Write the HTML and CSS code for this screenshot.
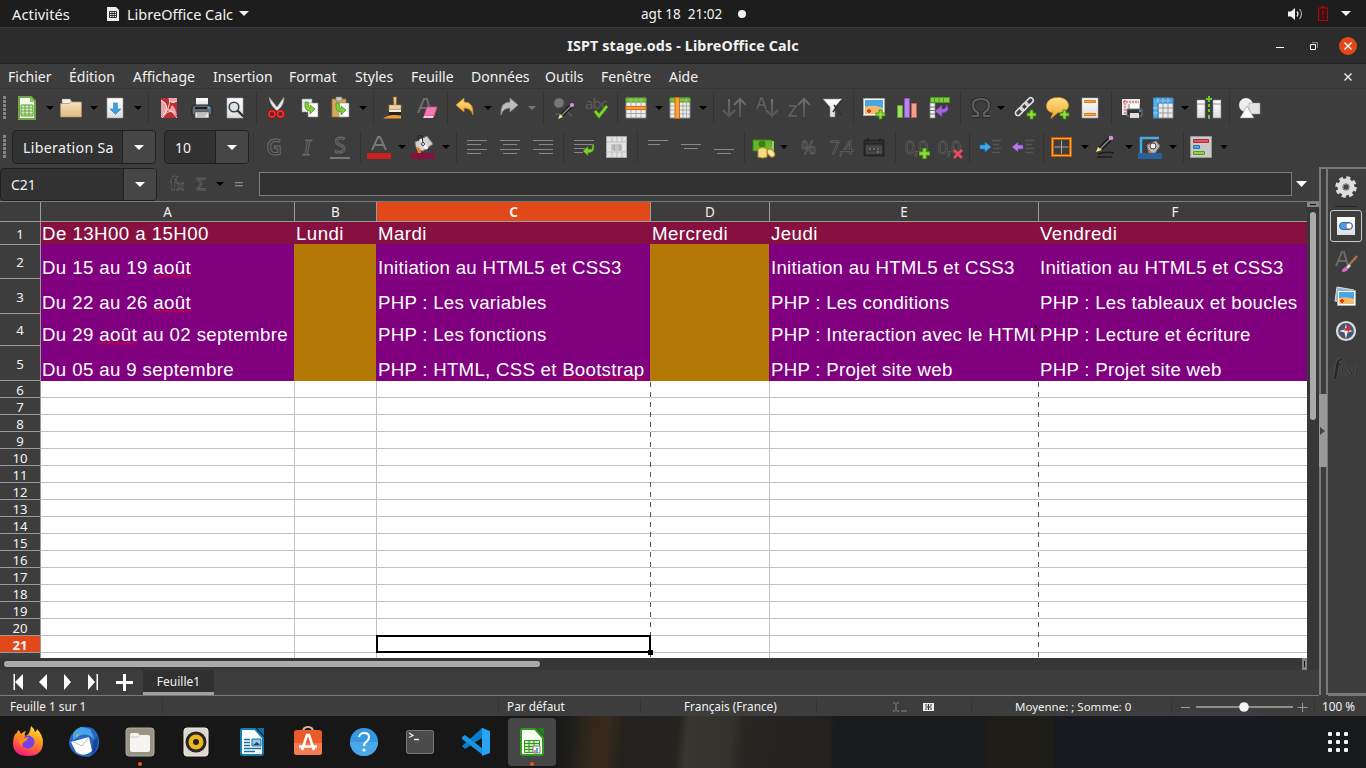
FILE: index.html
```html
<!DOCTYPE html>
<html lang="fr">
<head>
<meta charset="utf-8">
<title>ISPT stage.ods - LibreOffice Calc</title>
<link rel="stylesheet" href="styles.css">
</head>
<body>
<svg class="defs" width="0" height="0">
  <defs>
    <linearGradient id="paper" x1="0" y1="0" x2="0" y2="1"><stop offset="0" stop-color="#fff"/><stop offset="1" stop-color="#ddd"/></linearGradient>
    <linearGradient id="gold" x1="0" y1="0" x2="0" y2="1"><stop offset="0" stop-color="#ffe08a"/><stop offset="1" stop-color="#f0a428"/></linearGradient>
    <linearGradient id="sand" x1="0" y1="0" x2="0" y2="1"><stop offset="0" stop-color="#f8e2bd"/><stop offset="1" stop-color="#dfba83"/></linearGradient>
    <linearGradient id="dim" gradientUnits="userSpaceOnUse" x1="0" y1="0" x2="0" y2="24"><stop offset="0" stop-color="#737373"/><stop offset="1" stop-color="#505050"/></linearGradient>
    <linearGradient id="fire" x1=".7" y1="0" x2=".3" y2="1"><stop offset="0" stop-color="#ffe43a"/><stop offset=".45" stop-color="#ff8a1f"/><stop offset="1" stop-color="#f5157b"/></linearGradient>
    <g id="plus"><path d="M3 0h3v3h3v3H6v3H3V6H0V3h3z" fill="#8fdc3c" stroke="#3f8f10" stroke-width=".9"/></g>
  </defs>
</svg>

<header class="topbar">
  <span class="activities">Activités</span>
  <svg class="app-mark" width="12" height="14" viewBox="0 0 12 14"><path d="M0 0h9l3 3v11H0z" fill="#eee"/><path d="M2.500 4.500h7v6h-7zM2.500 6.500h7M2.500 8.500h7M5 4.500v6M7.300 4.500v6" fill="none" stroke="#333" stroke-width="1"/></svg>
  <span class="app-name">LibreOffice Calc</span>
  <svg class="tri" width="10" height="5" viewBox="0 0 10 5"><path d="M0 0h10L5 5z" fill="#f2f2f2"/></svg>
  <span class="clock">agt 18&nbsp; 21:02</span>
  <i class="dot"></i>
  <svg class="sound" width="15" height="14" viewBox="0 0 15 14"><path d="M0 4.500h3L7 1v12L3 9.500H0z" fill="#f2f2f2"/><path d="M9 4.500q2 2.500 0 5" fill="none" stroke="#ddd" stroke-width="1.300"/><path d="M11.500 2q4 5 0 10" fill="none" stroke="#aaa" stroke-width="1.200"/></svg>
  <svg class="battery" width="10" height="15" viewBox="0 0 10 15"><path d="M.500 2h9v12.500h-9zM3 1h4" fill="none" stroke="#c00000" stroke-width="1.200"/><path d="M5 4v5M5 10.500v2" stroke="#a80000" stroke-width="1.800"/></svg>
  <svg class="tri" width="10" height="5" viewBox="0 0 10 5"><path d="M0 0h10L5 5z" fill="#f2f2f2"/></svg>
</header>

<div class="titlebar">
  <b>ISPT stage.ods - LibreOffice Calc</b>
  <div class="win">
    <svg width="8" height="9" viewBox="0 0 8 9"><path d="M0 6.500h8" stroke="#fff"/></svg>
    <svg width="8" height="8" viewBox="0 0 8 8"><path d="M2 .500h5.500V6" fill="none" stroke="#888"/><path d="M.500 2.500h5v5h-5z" fill="none" stroke="#fff"/></svg>
    <span class="close"><svg width="8" height="8" viewBox="0 0 8 8"><path d="M.500.500l7 7M7.500.500l-7 7" stroke="#fff" stroke-width="1.400"/></svg></span>
  </div>
</div>

<nav class="menu">
  <span>Fichier</span><span>Édition</span><span>Affichage</span><span>Insertion</span><span>Format</span><span>Styles</span><span>Feuille</span><span>Données</span><span>Outils</span><span>Fenêtre</span><span>Aide</span>
  <svg width="8" height="8" viewBox="0 0 8 8"><path d="M.500.500l7 7M7.500.500l-7 7" stroke="#eee" stroke-width="1.400"/></svg>
</nav>

<div class="toolbar">
  <i class="grip"></i>
  <div class="tg t1 late">
    <svg class="ic" viewBox="0 0 24 24"><path d="M4 1h12l4 4v18H4z" fill="#f4f8ee" stroke="#6fa744" stroke-width="2"/><path d="M15 1v5h5z" fill="#8fc565"/><path d="M6 9h12v11H6z" fill="#d7efc2" stroke="#579a31"/><path d="M6 12h12M6 15h12M6 18h12M10 9v11M14 9v11" stroke="#579a31" stroke-width=".8"/></svg><i class="dd"></i>
    <svg class="ic" viewBox="0 0 24 24"><path d="M3 3h8l2 3h9v7H3z" fill="#eee" stroke="#888" stroke-width=".5"/><path d="M1.500 7.500H10L12 6h10.500v15h-21z" fill="url(#sand)" stroke="#ae8b5b" stroke-width=".7"/></svg><i class="dd"></i>
    <svg class="ic" viewBox="0 0 24 24"><path d="M4 2h16v20H4z" fill="url(#paper)" stroke="#999" stroke-width=".6"/><path d="M10.500 7h4v6H18l-5.500 5.500L7 13h3.500z" fill="#3f9ee0" stroke="#247bba" stroke-width=".5"/></svg><i class="dd"></i>
  </div>
  <div class="tg t2">
    <svg class="ic" viewBox="0 0 24 24"><path d="M4 2h16v20H4z" fill="#bb2f34"/><path d="M4 4q6 3 6 8t-6 8zM13 2h7v3q-4 3-6 1zM15 9q4 3 5 11-4-4-7-4-4 1-7 6h-1q6-7 8-9z" fill="#e9a5a5"/><path d="M4 4q6 3 6 8t-6 9M12 2q1 7 8 3M5 22q8-9 8-20M11 13q5 2 9 9" stroke="#fff" fill="none" stroke-width=".8"/></svg>
    <svg class="ic" viewBox="0 0 24 24"><path d="M6 2h12v8H6z" fill="url(#paper)"/><path d="M2 11l3-2h14l3 2v8H2z" fill="#626b6e" stroke="#202425"/><path d="M5 12h14" stroke="#1d2122" stroke-width="2"/><path d="M5 16h14v6H5z" fill="#e9e9e9" stroke="#444" stroke-width=".6"/><path d="M7 18h10M7 20h8" stroke="#999"/><circle cx="18.500" cy="12" r="1.200" fill="#20c8f4"/></svg>
    <svg class="ic" viewBox="0 0 24 24"><path d="M4 2h16v20H4z" fill="url(#paper)" stroke="#aaa" stroke-width=".6"/><circle cx="11" cy="11" r="4.800" fill="#dce3e5" stroke="#3c4245" stroke-width="1.600"/><path d="M14.500 14.500l6 6" stroke="#333" stroke-width="2.400"/></svg>
  </div>
  <div class="tg t3">
    <svg class="ic" viewBox="0 0 24 24"><path d="M4 1q1 8 6 12l2 2 2-2q5-4 5-12l-7 10z" fill="#e8e8e8" stroke="#888" stroke-width=".6"/><ellipse cx="7" cy="18" rx="3" ry="3" fill="none" stroke="#7d0b0b" stroke-width="3"/><ellipse cx="15.500" cy="18" rx="3" ry="3" fill="none" stroke="#7d0b0b" stroke-width="3"/><ellipse cx="7" cy="18" rx="3" ry="3" fill="none" stroke="#ee2e2e" stroke-width="1.800"/><ellipse cx="15.500" cy="18" rx="3" ry="3" fill="none" stroke="#ee2e2e" stroke-width="1.800"/></svg>
    <svg class="ic" viewBox="0 0 24 24"><path d="M4 3h10v13H4z" fill="#eee" stroke="#999" stroke-width=".6"/><path d="M10 7h10v14H10z" fill="#fff" stroke="#888" stroke-width=".6"/><path d="M7 6v5q1 4 5 4v3l5-5-5-4v3q-2 0-2-6z" fill="#86cf3b" stroke="#3f8f10" stroke-width=".7"/></svg>
    <svg class="ic" viewBox="0 0 24 24"><path d="M1 3h14v18H1z" fill="#d9a85f" stroke="#9b6f2c" stroke-width=".8"/><path d="M5 1h6v4H5z" fill="#ccc" stroke="#777" stroke-width=".7"/><path d="M8 7h10v14H8z" fill="#fff" stroke="#888" stroke-width=".6"/><path d="M5 7v5q1 4 5 4v3l5-5-5-4v3q-2 0-2-6z" fill="#86cf3b" stroke="#3f8f10" stroke-width=".7"/></svg><i class="dd"></i>
  </div>
  <div class="tg t4">
    <svg class="ic" viewBox="0 0 24 24"><path d="M11.500 1h3l-.5 9h-2z" fill="#f0cf95" stroke="#a87b35" stroke-width=".7"/><path d="M7 9h12v5H7z" fill="url(#sand)" stroke="#b08742" stroke-width=".7"/><path d="M7 14h12v2H7z" fill="#eee"/><path d="M7 16h12v3H7z" fill="#222"/><path d="M1 22.500q6-5 18-3v3z" fill="#ef9b2e"/></svg>
    <svg class="ic" viewBox="0 0 24 24"><path d="M3 17L9 3h3l3 11M5 12h7" fill="none" stroke="#6c6c6c" stroke-width="2"/><path d="M12 11h10l-3 9H9z" fill="#f17bae" stroke="#d94b8c" stroke-width=".7"/><path d="M9 20h10l-1 2H8z" fill="#ffc6de"/></svg>
  </div>
  <div class="tg t5 tight late">
    <svg class="ic" viewBox="0 0 24 24"><path d="M3 9l8-7v4q10 0 9 13-2-7-9-7v4z" fill="url(#gold)" stroke="#c58a16" stroke-width=".8"/></svg><i class="dd"></i>
    <svg class="ic" viewBox="0 0 24 24"><path d="M21 9l-8-7v4Q3 6 4 19q2-7 9-7v4z" fill="#bcbcbc" stroke="#888" stroke-width=".8"/></svg><i class="dd off"></i>
  </div>
  <div class="tg t6">
    <svg class="ic" viewBox="0 0 24 24"><circle cx="7" cy="7" r="5" fill="#777" stroke="#565656"/><path d="M12 13l8 7M3 18h7" stroke="#555" stroke-width="2"/><path d="M9 20L19 10" stroke="#1d1d1d" stroke-width="4"/><path d="M9 20L19 10" stroke="#888" stroke-width="1.500"/><circle cx="20" cy="9" r="2" fill="#e08be0"/><path d="M6 23l2-5 3 3z" fill="#f0df88"/></svg>
    <svg class="ic" viewBox="0 0 24 24"><text x="0" y="13" class="abc">abc</text><path d="M10 15l4 5 8-10" fill="none" stroke="#397c10" stroke-width="4"/><path d="M10 15l4 5 8-10" fill="none" stroke="#80d52c" stroke-width="2.500"/></svg>
  </div>
  <div class="tg t7 tight late">
    <svg class="ic" viewBox="0 0 24 24"><path d="M2 2h20v20H2z" fill="#eee" stroke="#888"/><path d="M2 2h20v4H2z" fill="#79c93c" stroke="#4c9a18"/><path d="M7 2v20M12 2v20M17 2v20M2 17.500h20" stroke="#aaa"/><path d="M2 10.500h20v3H2z" fill="#f5a13c" stroke="#d16a0d"/></svg><i class="dd"></i>
    <svg class="ic" viewBox="0 0 24 24"><path d="M2 2h20v20H2z" fill="#eee" stroke="#888"/><path d="M2 2h20v4H2z" fill="#79c93c" stroke="#4c9a18"/><path d="M15 6v16M18.500 2v20M2 10h20M2 14h20M2 18h20" stroke="#aaa"/><path d="M7 1.500h4.500v21H7z" fill="#f5a13c" stroke="#d16a0d"/></svg><i class="dd"></i>
  </div>
  <div class="tg t8">
    <svg class="ic" viewBox="0 0 24 24"><path d="M7 3v17M1 14l6 6 6-6M18 21V3M12 9l6-6 6 6" fill="none" stroke="url(#dim)" stroke-width="2"/></svg>
    <svg class="ic" viewBox="0 0 24 24"><path d="M2 13L6 2h1l4 11M4 9h6" fill="none" stroke="#626262" stroke-width="1.500"/><path d="M17 3v17M11 14l6 6 6-6" fill="none" stroke="url(#dim)" stroke-width="2"/></svg>
    <svg class="ic" viewBox="0 0 24 24"><path d="M1 10h7L1 20h8" fill="none" stroke="#626262" stroke-width="1.700"/><path d="M16 21V3M10 9l6-6 6 6" fill="none" stroke="url(#dim)" stroke-width="2"/></svg>
    <svg class="ic" viewBox="0 0 24 24"><path d="M2 3h19l-7 8v10H9V11z" fill="url(#paper)" stroke="#888" stroke-width=".6"/><path d="M13 9l8 11M20 5l-8 11" stroke="#333" stroke-width="1.600"/></svg>
  </div>
  <div class="tg t9">
    <svg class="ic" viewBox="0 0 24 24"><path d="M1.500 2.500h21v17h-21z" fill="#fff" stroke="#aaa"/><path d="M3 4h18v8H3z" fill="#47a6e5"/><path d="M3 11q8-3 18 1v6H3z" fill="#f5bb69"/><path d="M7 13v4M5 15h4" stroke="#d93b13" stroke-width="2"/><use href="#plus" x="14" y="14"/></svg>
    <svg class="ic" viewBox="0 0 24 24"><path d="M2.500 9.500h5v12h-5z" fill="#a4dc73" stroke="#57a61c"/><path d="M9.500 2.500h5v19h-5z" fill="#b889e4" stroke="#8b4fc8"/><path d="M16.500 7.500h5v14h-5z" fill="#f2a08b" stroke="#c95f46"/></svg>
    <svg class="ic" viewBox="0 0 24 24"><path d="M2 7h5v15H2z" fill="#eee" stroke="#888" stroke-width=".7"/><path d="M2 11h5M2 14.500h5M2 18h5" stroke="#777"/><path d="M2.500 1.500h19v5h-19z" fill="#82cc43" stroke="#4c9a18"/><path d="M6.500 2v4M11 2v4M15.500 2v4" stroke="#4c9a18"/><path d="M18 8q6 8-4 9v4l-7-6 7-6v4q5 0 4-5z" fill="#a365d5" stroke="#6b349c" stroke-width=".6"/></svg>
  </div>
  <div class="tg t10">
    <svg class="ic" viewBox="0 0 24 24"><path d="M3 20h6v-3q-5-3-5-8 0-6 8-6t8 6q0 5-5 8v3h6" fill="none" stroke="#292929" stroke-width="4"/><path d="M3 20h6v-3q-5-3-5-8 0-6 8-6t8 6q0 5-5 8v3h6" fill="none" stroke="#606060" stroke-width="2.200"/></svg><i class="dd"></i>
    <svg class="ic" viewBox="0 0 24 24"><g transform="rotate(-45 11 11)" fill="none" stroke="#ddd" stroke-width="1.700"><rect x="0" y="8.500" width="9" height="5" rx="2.500"/><rect x="7" y="8.500" width="9" height="5" rx="2.500"/><rect x="14" y="8.500" width="9" height="5" rx="2.500"/></g><use href="#plus" x="14" y="14"/></svg>
    <svg class="ic" viewBox="0 0 24 24"><path d="M12 1.500c-15 0-14 15-5 15l-2 6 7-6c15 0 13-15 0-15z" fill="url(#gold)" stroke="#d39a21" stroke-width=".7"/><use href="#plus" x="14" y="14"/></svg>
    <svg class="ic" viewBox="0 0 24 24"><path d="M3 2h16v20H3z" fill="url(#paper)" stroke="#aaa" stroke-width=".6"/><path d="M5.500 4.500h11v2h-11zM5.500 17.500h11v2h-11z" fill="#ffac42" stroke="#e47712"/></svg>
  </div>
  <div class="tg t11">
    <svg class="ic" viewBox="0 0 24 24"><path d="M2 3h18v16H2z" fill="#e6e6e6"/><path d="M5 4v14M3 6h16" stroke="#d33" stroke-dasharray="2 1"/><path d="M8 8h12v11H8z" fill="#bbb"/><path d="M10 8h9v5h-9z" fill="#fff"/><path d="M7 13h15v7H7z" fill="#343434" stroke="#777"/><path d="M10 17h9v5h-9z" fill="#ddd"/><circle cx="20" cy="15" r="1" fill="#20c8f4"/></svg>
    <svg class="ic" viewBox="0 0 24 24"><g transform="translate(-2 0)"><path d="M2 2h20v20H2z" fill="#eee" stroke="#888"/><path d="M7 7v15M12 7v15M17 7v15M7 12h15M7 17h15" stroke="#999"/><path d="M2 2h20v5H7v15H2z" fill="#5badea" stroke="#2674b8"/><path d="M7 2v5M12 2v5M17 2v5M2 12h5M2 17h5" stroke="#9ad0f5"/></g></svg><i class="dd"></i>
    <svg class="ic wide" viewBox="0 0 28 24"><path d="M2 4h8v18H2zM18 4h8v18h-8z" fill="url(#paper)" stroke="#888" stroke-width=".6"/><path d="M2 8h8M18 8h8" stroke="#999"/><path d="M14 0v6M11 3h6M14 8v3M14 13v3M14 19v4" stroke="#6cc82b" stroke-width="2"/></svg>
  </div>
  <div class="tg t12">
    <svg class="ic" viewBox="0 0 24 24"><circle cx="8" cy="9" r="7" fill="#ededed"/><path d="M11 7h11v11H11z" fill="#e3e3e3" stroke="#999" stroke-width=".5"/><path d="M9 10l7 12H2z" fill="#fff" stroke="#888" stroke-width=".6"/></svg>
  </div>
</div>

<div class="toolbar second">
  <i class="grip"></i>
  <div class="combo font"><span>Liberation Sa</span><i><svg width="10" height="5" viewBox="0 0 10 5"><path d="M0 0h10L5 5z" fill="#fff"/></svg></i></div>
  <div class="combo size"><span>10</span><i><svg width="10" height="5" viewBox="0 0 10 5"><path d="M0 0h10L5 5z" fill="#fff"/></svg></i></div>
  <div class="tg f1">
    <span class="ic letter">G</span><span class="ic letter italic">I</span><span class="ic letter underline">S</span>
  </div>
  <div class="tg f2 tight late">
    <svg class="ic" viewBox="0 0 24 24"><path d="M5 15L11 2h2l6 13M7 10h10" fill="none" stroke="#777" stroke-width="2"/><path d="M0 18h24v6H0z" fill="#c9211e"/></svg><i class="dd"></i>
    <svg class="ic" viewBox="0 0 24 24"><path d="M4 7l12-6 6 8-10 7q-8 0-8-9z" fill="#d2d2d2" stroke="#777"/><path d="M10 4l6 10" stroke="#fff" stroke-width="3"/><path d="M7 6q-1-7 4-5l1 7" fill="none" stroke="#222" stroke-width="1.100"/><circle cx="12" cy="9" r="1.500" fill="#fff" stroke="#333"/><path d="M5 12q5 0 5 6H7z" fill="#ed7d23"/><path d="M0 18h24v6H0z" fill="#861141"/></svg><i class="dd"></i>
  </div>
  <div class="tg f3">
    <svg class="ic" viewBox="0 0 24 24"><path d="M2 5.500h20M2 9.500h14M2 14.500h20M2 18.500h14" class="ln"/></svg>
    <svg class="ic" viewBox="0 0 24 24"><path d="M2 5.500h20M5 9.500h14M2 14.500h20M5 18.500h14" class="ln"/></svg>
    <svg class="ic" viewBox="0 0 24 24"><path d="M2 5.500h20M8 9.500h14M2 14.500h20M8 18.500h14" class="ln"/></svg>
  </div>
  <div class="tg f4">
    <svg class="ic" viewBox="0 0 24 24"><path d="M2 5.500h20M2 9.500h20M2 13.500h11M2 17.500h9" class="ln"/><path d="M20 10v4h-4v-3l-5 5 5 5v-3q7 0 6-8z" fill="#7bd02d" stroke="#397c10" stroke-width=".7"/></svg>
    <svg class="ic" viewBox="0 0 24 24"><path d="M1.500 1.500h20v21h-20z" fill="#e3e3e3" stroke="#aaa"/><path d="M7 2v5M12 2v5M17 2v5M7 17v5M12 17v5M17 17v5M2 7h20M2 17h20" stroke="#bbb"/><path d="M6 9h11v7H6z" fill="#c4c4c4"/><path d="M10 10l-2 2.500 2 2.500M14 10l2 2.500-2 2.500" stroke="#999" fill="none"/></svg>
  </div>
  <div class="tg f5">
    <svg class="ic" viewBox="0 0 24 24"><path d="M2 5.500h20M2 9.500h12" class="ln"/></svg>
    <svg class="ic" viewBox="0 0 24 24"><path d="M2 9.500h20M5 13.500h14" class="ln"/></svg>
    <svg class="ic" viewBox="0 0 24 24"><path d="M2 14.500h20M5 18.500h14" class="ln"/></svg>
  </div>
  <div class="tg f6">
    <svg class="ic" viewBox="0 0 24 24"><path d="M1 5h19v11H1z" fill="#67b52e" stroke="#3d7f12"/><path d="M20 6h2v11h-3" fill="#8ed45c"/><circle cx="10" cy="9" r="3.500" fill="#398213"/><path d="M6 14q4-3 9 0v8q-4 2-9 0z" fill="#f5dc86" stroke="#b48b24"/><ellipse cx="19" cy="18" rx="3" ry="4.500" transform="rotate(-40 19 18)" fill="#fbe7a2" stroke="#b48b24"/></svg><i class="dd"></i>
    <span class="ic num">%</span><span class="ic num">7,4</span>
    <svg class="ic" viewBox="0 0 24 24"><path d="M2.500 5.500h19v15h-19zM2.500 8.500h19M6 3v4M18 3v4" fill="none" stroke="#242424" stroke-width="2"/><path d="M5 12h14v6H5z" fill="none" stroke="#555"/><path d="M7 14h2M11 14h2M15 14h2M15 17h2" stroke="#777" stroke-width="1.500"/></svg>
  </div>
  <div class="tg f7">
    <div class="ic num">0,0<svg class="mark" width="11" height="11" viewBox="0 0 9 9"><use href="#plus"/></svg></div>
    <div class="ic num">0,0<svg class="mark" width="10" height="10" viewBox="0 0 10 10"><path d="M1 1l8 8M9 1L1 9" stroke="#ef4a55" stroke-width="2.500"/></svg></div>
  </div>
  <div class="tg f8">
    <svg class="ic" viewBox="0 0 24 24"><path d="M14 5.500h9M15 9.500h6M15 13.500h8M14 17.500h8" stroke="#555" stroke-width="1.500"/><path d="M2 10h5V7l6 5-6 5v-3H2z" fill="#3faaf0" stroke="#1c75b4" stroke-width=".7"/></svg>
    <svg class="ic" viewBox="0 0 24 24"><path d="M14 5.500h9M15 9.500h6M15 13.500h8M14 17.500h8" stroke="#555" stroke-width="1.500"/><path d="M12 10H7V7l-6 5 6 5v-3h5z" fill="#b47be0" stroke="#7a3aae" stroke-width=".7"/></svg>
  </div>
  <div class="tg f9 tight late">
    <svg class="ic" viewBox="0 0 24 24"><path d="M2.500 3.500h18v17h-18z" fill="none" stroke="#bd5b08" stroke-width="3"/><path d="M2.500 3.500h18v17h-18z" fill="none" stroke="#ffa22e" stroke-width="1.200"/><path d="M11.500 5.500v13M4.500 12h14" stroke="#aaa"/></svg><i class="dd"></i>
    <svg class="ic" viewBox="0 0 24 24"><path d="M6 14L16 4" stroke="#1d1d1d" stroke-width="5"/><path d="M6 14L16 4" stroke="#888" stroke-width="1.500"/><circle cx="17" cy="3" r="2.300" fill="#df8bdf"/><path d="M2 17l2-5 4 3z" fill="#f0df88"/><path d="M4 19q8-3 16-1M3 22h15" fill="none" stroke="#1b1b1b" stroke-width="1.500"/></svg><i class="dd"></i>
    <svg class="ic" viewBox="0 0 24 24"><path d="M3 18V3h18" fill="none" stroke="#49a9e8" stroke-width="2.500"/><path d="M9 10l9-4 4 5-5 7h-6z" fill="#bbb" stroke="#777"/><circle cx="15" cy="11" r="3" fill="#eee" stroke="#444"/><path d="M10 13l4 5h-3z" fill="#e06b1b"/><path d="M0 18h24v6H0z" fill="#2a6099"/></svg><i class="dd"></i>
  </div>
  <div class="tg f10 tight late">
    <svg class="ic" viewBox="0 0 24 24"><path d="M1.500 1.500h21v21h-21z" fill="#cacaca" stroke="#999"/><path d="M4.500 4.500h15v3h-15z" fill="#e8555b" stroke="#ab2c32"/><path d="M4.500 10.500h6v3h-6z" fill="#52a7dc" stroke="#2774aa"/><path d="M4.500 16.500h11v3h-11z" fill="#93cf4d" stroke="#5b9c18"/></svg><i class="dd"></i>
  </div>
</div>

<main class="work">
  <section class="left">
    <div class="formula">
      <div class="combo name"><span>C21</span><i><svg width="10" height="5" viewBox="0 0 10 5"><path d="M0 0h10L5 5z" fill="#fff"/></svg></i></div>
      <div class="fx"><span class="f">f<small>x</small></span><span class="s">Σ</span><i class="dd"></i><span class="e">=</span></div>
      <div class="input"></div>
      <svg class="expand" width="11" height="6" viewBox="0 0 11 6"><path d="M0 0h11L5.500 6z" fill="#fff"/></svg>
    </div>
    <div class="sheet-wrap">
      <div class="rowheads">
        <span class="corner"></span><span class="r1">1</span><span class="r2">2</span><span class="r3">3</span><span class="r4">4</span><span class="r5">5</span>
        <span>6</span><span>7</span><span>8</span><span>9</span><span>10</span><span>11</span><span>12</span><span>13</span><span>14</span><span>15</span><span>16</span><span>17</span><span>18</span><span>19</span><span>20</span><span class="on">21</span><span>22</span>
      </div>
      <div class="sheet">
        <div class="cols heads"><span>A</span><span>B</span><span class="on">C</span><span>D</span><span>E</span><span>F</span></div>
        <div class="cols days"><span>De 13H00 a 15H00</span><span>Lundi</span><span>Mardi</span><span>Mercredi</span><span>Jeudi</span><span>Vendredi</span></div>
        <div class="cols data d2"><span>Du 15 au 19 <u>août</u></span><span class="off"></span><span>Initiation au HTML5 et CSS3</span><span class="off"></span><span>Initiation au HTML5 et CSS3</span><span>Initiation au HTML5 et CSS3</span></div>
        <div class="cols data d3"><span>Du 22 au 26 <u>août</u></span><span class="off"></span><span>PHP : Les variables</span><span class="off"></span><span>PHP : Les conditions</span><span>PHP : Les tableaux et boucles</span></div>
        <div class="cols data d4"><span>Du 29 <u>août</u> au 02 septembre</span><span class="off"></span><span>PHP : Les fonctions</span><span class="off"></span><span class="cut"><em>PHP : Interaction avec le HTML</em><svg width="3" height="8" viewBox="0 0 3 8"><path d="M0 0l3 4-3 4z" fill="#000"/><path d="M0 3h2v2H0z" fill="#c00"/></svg></span><span>PHP : Lecture et écriture</span></div>
        <div class="cols data d5"><span>Du 05 au 9 septembre</span><span class="off"></span><span>PHP : HTML, CSS et <u>Bootstrap</u></span><span class="off"></span><span>PHP : Projet site web</span><span>PHP : Projet site web</span></div>
        <div class="cols blank"><span></span><span></span><span><i class="cursor"></i></span><span class="pb"></span><span></span><span class="pb"></span></div>
      </div>
      <div class="vscroll"><i class="split"></i><i class="thumb"></i></div>
    </div>
    <div class="hscroll"><i class="thumb"></i><i class="split"></i></div>
    <div class="tabs">
      <svg class="navs" width="134" height="24" viewBox="0 0 134 24"><g fill="#fff"><path d="M13.500 4H15v16h-1.500zM23 4v16l-8-8zM47 4v16l-8-8zM64 4v16l7-8zM88 4v16l7-8zM96.500 4H98v16h-1.500z"/><path d="M116 11h17v3h-17zM123 4h3v17h-3z"/></g></svg>
      <span class="tab">Feuille1</span>
    </div>
  </section>
  <div class="splitter"><i><svg width="5" height="8" viewBox="0 0 5 8"><path d="M0 0l5 4-5 4z" fill="#444"/></svg></i></div>
  <aside class="side">
    <svg class="gear" width="24" height="24" viewBox="0 0 24 24"><circle cx="12" cy="12" r="9" fill="none" stroke="#ddd" stroke-width="3.500" stroke-dasharray="4 3.070"/><circle cx="12" cy="12" r="6" fill="#666" stroke="#ddd" stroke-width="5"/><circle cx="12" cy="12" r="3" fill="#444" stroke="#888"/></svg>
    <i class="rule"></i>
    <div class="pick"><svg width="18" height="18" viewBox="0 0 18 18"><path d="M0 0h18v18H0z" fill="url(#paper)"/><rect x="2.500" y="5.500" width="13" height="7" rx="3.500" fill="#4a9be8" stroke="#2b6cb3"/><circle cx="12" cy="9" r="3" fill="#fff" stroke="#777" stroke-width=".7"/></svg></div>
    <svg class="sty" width="24" height="24" viewBox="0 0 24 24"><path d="M2 17L8 3h2l4 14M4 12h8" fill="none" stroke="#6b6b6b" stroke-width="2"/><path d="M15 16l8-9" stroke="#a6704a" stroke-width="2.500"/><path d="M12 18l3-3 2 2-3 3z" fill="#ddd"/><path d="M8 23q0-4 4-5l2 2q-1 3-6 3z" fill="#e06ccb"/></svg>
    <svg class="gal" width="24" height="24" viewBox="0 0 24 24"><path d="M3 2l17 3v14L1 16z" fill="#7ebfe9" stroke="#ddd"/><path d="M3.500 5.500h18v15h-18z" fill="#fff" stroke="#aaa"/><path d="M5 7h15v7H5z" fill="#47a6e5"/><path d="M5 13q7-2 15 1v5H5z" fill="#f5bb69"/><path d="M8 14v4M6 16h4" stroke="#d93b13" stroke-width="2"/></svg>
    <svg class="nav" width="24" height="24" viewBox="0 0 24 24"><circle cx="12" cy="12" r="9" fill="#46566e" stroke="#ddd" stroke-width="2.200"/><path d="M12 5l1.200 5.500L19 12l-5.500 1.500L12 20l-1.500-6.500L5 12l5.500-1.500z" fill="#eee"/><path d="M17 6l-2 7-5-3zM6 10l6 1v1z" fill="#df2b35"/></svg>
    <span class="func"><i>f</i><small>(x)</small></span>
  </aside>
</main>

<footer class="status">
  <span class="s1">Feuille 1 sur 1</span><span class="s2">Par défaut</span><span class="s3">Français (France)</span>
  <span class="s4"><svg width="44" height="12" viewBox="0 0 44 12"><path d="M1 2h2M5 2h2M4 2v8M1 10h2M5 10h2M9 10h6" stroke="#888" fill="none"/><path d="M31 2h11v8H31z" fill="#eee"/><path d="M36.500 3v6M33.500 6h6" stroke="#333" stroke-width="1.200"/><path d="M33 4h2M38 4h2M33 8h2M38 8h2" stroke="#333"/></svg></span>
  <span class="s5">Moyenne: ; Somme: 0</span>
  <span class="s6"><svg width="124" height="12" viewBox="0 0 124 12"><path d="M1 6.500h9M117.500 6.500h10M122.500 2v9" stroke="#999"/><path d="M16 6h97" stroke="#aaa" stroke-width="1.500"/><circle cx="64" cy="6" r="4.800" fill="#f4f4f4"/></svg></span>
  <span class="s7">100 %</span>
</footer>

<div class="dock">
  <div class="app"><svg viewBox="0 0 32 32"><path d="M3 8q2 0 3-4 2 1 3 4 3-3 5-3-2 3-1 5 5-1 6-10 3 2 4 6 2-1 2-3 6 6 6 13 0 14-15 14T1 17q0-5 2-9z" fill="url(#fire)"/><circle cx="16" cy="16" r="6.500" fill="#7542e5"/><path d="M6 10q5-1 7 2l4-1-3 4q-4 1-4 5-4-3-4-10z" fill="#ff8b1c"/></svg></div>
  <div class="app"><svg viewBox="0 0 32 32"><path d="M13 1q16-2 18 13 1 12-10 17-17 0-20-13Q0 8 13 1z" fill="#2866bf"/><path d="M13 1q-10 3-8 13l8-5q7-2 14 5L22 3z" fill="#46a4e8"/><path d="M3 16l18-5 3 14q-9 7-16 1z" fill="#fff"/><path d="M4 15l10 5 7-9" fill="none" stroke="#bbb"/><path d="M8 9l3-1-2 3z" fill="#ffb326"/><path d="M29 10q3 10-5 20l1-14z" fill="#14469a"/></svg></div>
  <div class="app run"><svg viewBox="0 0 32 32"><rect x="2" y="2" width="28" height="28" rx="3" fill="#989383" stroke="#b2ad9d"/><path d="M6 9q0-2 2-2h6l2 2h8q2 0 2 2v13q0 2-2 2H8q-2 0-2-2z" fill="#f5f4f1"/><path d="M6 11h8l2-2" fill="none" stroke="#ccc"/></svg></div>
  <div class="app"><svg viewBox="0 0 32 32"><rect x="4" y="2" width="24" height="28" rx="3" fill="#ddd8cd" stroke="#f1ece1"/><circle cx="16" cy="16" r="10.500" fill="#272727"/><circle cx="16" cy="16" r="7.500" fill="#f0b81e"/><circle cx="16" cy="16" r="3" fill="#222"/></svg></div>
  <div class="app"><svg viewBox="0 0 32 32"><path d="M6 3h13l8 9v15q0 2-2 2H7q-2 0-2-2V4z" fill="#fff" stroke="#147eb3" stroke-width="2"/><path d="M21 2h7v8z" fill="#126e9e"/><path d="M8 13.500h6M8 16.500h6M8 19.500h6M8 22.500h17M8 25.500h11" stroke="#176f9c" stroke-width="1.300"/><path d="M16 13h9v7h-9z" fill="#8ecaf1" stroke="#176f9c"/><path d="M17 19l4-3 3 3z" fill="#245"/></svg></div>
  <div class="app"><svg viewBox="0 0 32 32"><path d="M11 6q0-5 5-5t5 5" fill="none" stroke="#d7b799" stroke-width="2"/><rect x="2" y="4" width="28" height="25" rx="3" fill="#eb5b2a"/><path d="M2 17h28v9q0 3-3 3H5q-3 0-3-3z" fill="#f57c52"/><path d="M10 24l5-15h2l5 15M7 20.500h18" fill="none" stroke="#fff" stroke-width="2.600"/></svg></div>
  <div class="app"><svg viewBox="0 0 32 32"><circle cx="16" cy="16" r="14" fill="#3498e0"/><path d="M2 16h28a14 14 0 0 1-28 0z" fill="#4aa8e9"/><path d="M11 11q1-4 5-4 5 0 5 4 0 3-3 5-2 1-2 4" fill="none" stroke="#fff" stroke-width="2"/><circle cx="16" cy="24" r="1.600" fill="#fff"/></svg></div>
  <div class="app"><svg viewBox="0 0 32 32"><rect x="2.500" y="4.500" width="27" height="23" rx="2" fill="#4b4b4b" stroke="#777"/><path d="M5 7l4 2.500-4 2M10 13.500h5" fill="none" stroke="#eee" stroke-width="1.300"/></svg></div>
  <div class="app"><svg viewBox="0 0 32 32"><path d="M2 20L22 2l3 1v7L5 23z" fill="#087cc7"/><path d="M2 11l3-2 18 14v6L2 13z" fill="#1696df"/><path d="M22 2l8 3v22l-8 3z" fill="#28a4f2"/></svg></div>
  <div class="app run active"><svg viewBox="0 0 32 32"><path d="M6 3h13l8 9v15q0 2-2 2H7q-2 0-2-2V4z" fill="#f9fff5" stroke="#339a21" stroke-width="2"/><path d="M21 2h7v8z" fill="#21831a"/><path d="M8.500 14.500h15v12h-15zM8.500 17.500h15M8.500 20.500h15M8.500 23.500h15M13 14v12M18 14v12" fill="#c7efb8" stroke="#38931f"/><path d="M17 20h7v7h-7z" fill="#fff" stroke="#777"/><path d="M19 27v-3" stroke="#ee6d25" stroke-width="1.500"/><path d="M21 27v-5" stroke="#278bd0" stroke-width="1.500"/></svg></div>
  <svg class="grid" width="22" height="22" viewBox="0 0 22 22"><g fill="#f2f2f2"><rect x="1" y="1" width="4" height="4" rx="1"/><rect x="9" y="1" width="4" height="4" rx="1"/><rect x="17" y="1" width="4" height="4" rx="1"/><rect x="1" y="9" width="4" height="4" rx="1"/><rect x="9" y="9" width="4" height="4" rx="1"/><rect x="17" y="9" width="4" height="4" rx="1"/><rect x="1" y="17" width="4" height="4" rx="1"/><rect x="9" y="17" width="4" height="4" rx="1"/><rect x="17" y="17" width="4" height="4" rx="1"/></g></svg>
</div>
</body>
</html>
```

FILE: styles.css
```css
* { box-sizing: border-box; }
body { margin: 0; width: 1366px; height: 768px; overflow: hidden; display: flex; flex-direction: column; background: #3d3d3d; color: #f2f2f2; font-family: "Noto Sans", "Open Sans", sans-serif; font-size: 14px; white-space: nowrap; }
body > * { flex: none; }
svg { display: block; flex: none; }
.defs { height: 0; }
i { font-style: normal; }

/* desktop panel */
.topbar { height: 28px; background: #1d1d1d; border-bottom: 1px solid #393939; display: flex; align-items: center; }
.activities { width: 95px; margin-left: 12px; font-size: 14.6px; letter-spacing: .1px; }
.app-name { margin-left: 8px; width: 112px; font-size: 14.5px; }
.clock { width: 97px; margin-left: 392px; font-size: 13.5px; }
.dot { width: 8px; height: 8px; border-radius: 50%; background: #f2f2f2; }
.sound { margin-left: 542px; }
.battery { margin-left: 15px; }
.battery + .tri { margin-left: 13px; }

.titlebar { height: 36px; background: #2c2c2c; border-bottom: 1px solid #222; display: grid; grid-template-columns: 1fr auto 1fr; align-items: center; }
.titlebar b { grid-column: 2; font-size: 14.3px; letter-spacing: .15px; }
.win { display: flex; align-items: center; justify-content: flex-end; gap: 26px; padding-right: 9px; }
.close { width: 18px; height: 18px; margin-left: -5px; border-radius: 50%; background: #e1491a; display: grid; place-items: center; }

.menu { height: 25px; display: grid; grid-template-columns: 61px 64px 80px 76px 66px 56px 60px 74px 56px 68px 675px 8px; align-items: center; padding: 1px 0 0 8px; border-bottom: 1px solid #363636; }

/* toolbars */
.toolbar { height: 38px; display: flex; align-items: center; }
.second { height: 40px; }
.grip { width: 3px; height: 24px; margin-left: 3px; background: repeating-linear-gradient(#858585 0 3px, transparent 3px 4px); flex: none; }
.tg { height: 32px; display: flex; align-items: center; border-left: 1px solid #333; padding-left: 4px; flex: none; }
.tight { padding-left: 1px; }
.ic { width: 24px; height: 24px; margin: 0 5px 0 4px; flex: none; position: relative; }
.ic.wide { width: 28px; margin: 0 2px; }
.dd { width: 8px; height: 4px; margin-left: -1px; margin-right: 4px; background: #000; clip-path: polygon(0 0, 100% 0, 50% 100%); flex: none; }
.late .dd { margin-left: 2px; margin-right: 1px; }
.dd.off { background: #777; }
.t1 { width: 142px; border: 0; padding-left: 5px; }
.t2 { width: 108px; }
.t3 { width: 117px; }
.t4 { width: 74px; }
.t5 { width: 96px; }
.t6 { width: 74px; }
.t7 { width: 96px; padding-left: 2px; }
.t8 { width: 140px; }
.t9 { width: 107px; }
.t10 { width: 151px; }
.t11 { width: 118px; }
.ln { stroke: #888; stroke-width: 1; fill: none; }
.abc { font: 15px "Noto Sans", sans-serif; fill: #5c5c5c; letter-spacing: -1px; }

.combo { display: flex; height: 34px; background: #323232; border: 1px solid #202020; border-radius: 4px; overflow: hidden; flex: none; }
.combo span { flex: 1; padding-left: 10px; align-self: center; }
.combo i { width: 33px; background: #464646; border-left: 1px solid #202020; display: grid; place-items: center; }
.font { width: 144px; margin-left: 6px; letter-spacing: .3px; font-size: 14.200px; }
.size { width: 85px; margin-left: 8px; margin-right: 4px; }
.f1 { width: 107px; }
.f2 { width: 96px; padding-left: 2px; }
.f3 { width: 107px; }
.f4 { width: 74px; }
.f5 { width: 107px; }
.f6 { width: 151px; padding-left: 3px; }
.f7 { width: 74px; }
.f8 { width: 74px; }
.f9 { width: 140px; padding-left: 2px; }
.letter, .num { text-align: center; line-height: 24px; color: #3a3a3a; -webkit-text-stroke: 1px #6c6c6c; font-size: 21px; }
.letter { font-weight: 600; -webkit-text-stroke: 1px #6c6c6c; }
.italic { font: italic 24px/24px "Liberation Serif", serif; }
.underline { font-weight: normal; border-bottom: 2px solid #777; line-height: 20px; width: 20px; margin: 0 6px; }
.num { font-size: 18px; letter-spacing: -1px; color: #2c2c2c; -webkit-text-stroke: .8px #606060; }
.mark { position: absolute; right: -2px; bottom: 0; }

/* document area */
.work { height: 529px; display: flex; }
.left { width: 1319px; }
.formula { height: 35px; display: flex; align-items: center; border-bottom: 1px solid #7b7b7b; }
.name { width: 157px; height: 33px; }
.fx { width: 102px; display: flex; align-items: center; color: #303030; -webkit-text-stroke: .8px #626262; font: bold 17px/24px "Noto Sans", sans-serif; }
.fx .f { width: 26px; margin-left: 13px; }
.fx small { font-size: 13px; }
.fx .s { width: 20px; font-weight: normal; }
.fx .dd { margin: 0 10px 0 0; }
.fx .e { color: #888; -webkit-text-stroke: 0; font-weight: normal; }
.input { width: 1033px; height: 24px; border: 1px solid #7b7b7b; background: #323232; }
.expand { margin-left: 4px; }

.sheet-wrap { height: 456px; display: flex; overflow: hidden; }
.rowheads { width: 41px; height: 456px; overflow: hidden; border-right: 1px solid #9b9b9b; display: flex; flex-direction: column; }
.rowheads span { height: 17px; flex: none; border-bottom: 1px solid #9b9b9b; display: flex; align-items: center; justify-content: center; line-height: 18px; font-size: 13.2px; padding-top: 1px; }
.rowheads .corner { height: 20px; }
.rowheads .r1 { height: 23px; }
.rowheads .r2 { height: 34px; }
.rowheads .r3 { height: 35px; }
.rowheads .r4 { height: 32px; }
.rowheads .r5 { height: 35px; }
.rowheads .on, .heads .on { background: #e1491a; font-weight: bold; }
.sheet { width: 1266px; }
.cols { display: grid; grid-template-columns: 253px 82px 274px 119px 269px 269px; }
.heads { height: 20px; border-bottom: 1px solid #9b9b9b; font-size: 13.500px; line-height: 20px; text-align: center; }
.heads span { height: 19px; }
.heads span + span { border-left: 1px solid #9b9b9b; }
.heads span:last-child { padding-left: 4px; }
.days, .data { font: 18.67px/20px "Liberation Sans", Arial, sans-serif; letter-spacing: .45px; color: #fff; }
.days { height: 22px; background: #861141; }
.data { background: #800080; letter-spacing: .27px; }
.data span:first-child { letter-spacing: .37px; }
.days span, .data span { padding-left: 1px; display: flex; align-items: flex-end; white-space: pre; overflow: hidden; }
.days span + span, .data span + span { padding-left: 2px; }
.data u { text-decoration: none; height: 20px; background: url("data:image/svg+xml,%3Csvg xmlns='http://www.w3.org/2000/svg' width='8' height='4'%3E%3Cpath d='M0 3.200Q1 3.200 2 2T4 .8 6 2 8 3.200' fill='none' stroke='%23e00020' stroke-width='1.100'/%3E%3C/svg%3E") 0 100% / 8px 4px repeat-x; }
.data .off { background: #b47804; }
.d2 { height: 34px; }
.d3 { height: 35px; }
.d4 { height: 32px; }
.d5 { height: 36px; }
.d5 span { padding-bottom: 1px; }
.cut em { font-style: normal; width: 264px; overflow: hidden; flex: none; }
.cut svg { align-self: center; margin-bottom: 1px; }
.blank { height: 277px; color: #c0c0c0; background: repeating-linear-gradient(#fff 0 16px, #c0c0c0 16px 17px); }
.blank span { position: relative; }
.blank span + span { border-left: 1px solid #c0c0c0; }
.blank .pb { border-left: 0; background: repeating-linear-gradient(#fff 0 1px, #555 1px 6px, #fff 6px 10px) 0 0 / 1px 100% no-repeat; }
.cursor { position: absolute; left: -1px; top: 254px; width: 275px; height: 18px; border: 2px solid #000; z-index: 1; }
.cursor::after { content: ""; position: absolute; right: -4px; bottom: -4px; width: 5px; height: 5px; background: #000; }
.vscroll { width: 12px; background: #373737; }
.vscroll .split { display: block; height: 5px; border: solid #858585; border-width: 2px 3px; background: #111; }
.vscroll .thumb { display: block; width: 6px; height: 208px; margin: 5px 3px; border-radius: 3px; background: #aaa; }
.hscroll { height: 12px; background: #373737; display: flex; align-items: center; padding-left: 4px; }
.hscroll .thumb { width: 536px; height: 6px; border-radius: 3px; background: #aaa; }
.hscroll .split { width: 5px; height: 12px; margin-left: 762px; background: #111; border: solid #858585; border-width: 3px 2px; }
.tabs { height: 26px; display: flex; border-bottom: 1px solid #7b7b7b; font-size: 12px; }
.navs { width: 134px; }
.tab { width: 71px; height: 25px; margin-left: 9px; background: #303030; border-bottom: 3px solid #a0a0a0; text-align: center; line-height: 24px; }
.splitter { width: 9px; height: 528px; border: 2px solid #797979; border-bottom: 0; padding-top: 225px; }
.splitter i { display: flex; width: 8px; height: 73px; margin-left: -2px; background: #999; align-items: center; padding-left: 1px; }
.side { width: 38px; height: 529px; padding-right: 2px; border-top: 2px solid #797979; border-bottom: 3px solid #797979; display: flex; flex-direction: column; align-items: center; }
.gear { margin-top: 6px; }
.rule { width: 22px; height: 1px; margin-top: 7px; background: #252525; }
.pick { width: 32px; height: 32px; margin-top: 3px; border: 1px solid #ccc; border-radius: 3px; display: grid; place-items: center; }
.sty { margin-top: 7px; }
.gal { margin-top: 12px; }
.nav { margin-top: 10px; }
.func { margin-top: 10px; color: #262626; font: 22px/28px "Liberation Serif", serif; text-shadow: 0 0 1px #888; }
.func i { font-style: italic; font-weight: bold; }
.func small { font-size: 15px; }

.status { height: 20px; display: flex; align-items: center; font-size: 11.8px; }
.status span { height: 14px; line-height: 15px; border-right: 1px solid #343434; display: flex; align-items: center; flex: none; padding-top: 1px; }
.status .s1 { width: 163px; padding-left: 10px; margin-right: 335px; }
.status .s2 { width: 143px; padding-left: 8px; border-left: 1px solid #343434; }
.status .s3 { width: 176px; padding-left: 43px; }
.status .s4 { width: 155px; padding-left: 75px; }
.status .s5 { width: 200px; padding-left: 43px; font-size: 11.5px; }
.status .s6 { width: 143px; padding-left: 8px; }
.status .s6 svg { overflow: visible; }
.status .s7 { border: 0; padding-left: 7px; }

/* launcher */
.dock { height: 52px; display: flex; align-items: center; background: linear-gradient(96deg, transparent 0 572px, #33281a 592px, #35291a 606px, #24221e 622px, #262420 676px, #38362f 686px, #33312b 730px, #282622 742px, #24221f 820px, transparent 832px), linear-gradient(90deg, #171717 0 550px, #22211e 580px 830px, #191b1c 832px 985px, #1f1d18 988px 1052px, #171a1e 1056px 1250px, #17191b); }
.app { width: 48px; height: 48px; margin: 0 4px; display: grid; place-items: center; position: relative; border-radius: 4px; flex: none; }
.app svg { width: 32px; height: 32px; }
.active { background: #464646; }
.run::after { content: ""; position: absolute; left: 22px; bottom: 0; width: 4px; height: 4px; border-radius: 50%; background: #e95420; }
.grid { margin-left: auto; margin-right: 17px; }
```
